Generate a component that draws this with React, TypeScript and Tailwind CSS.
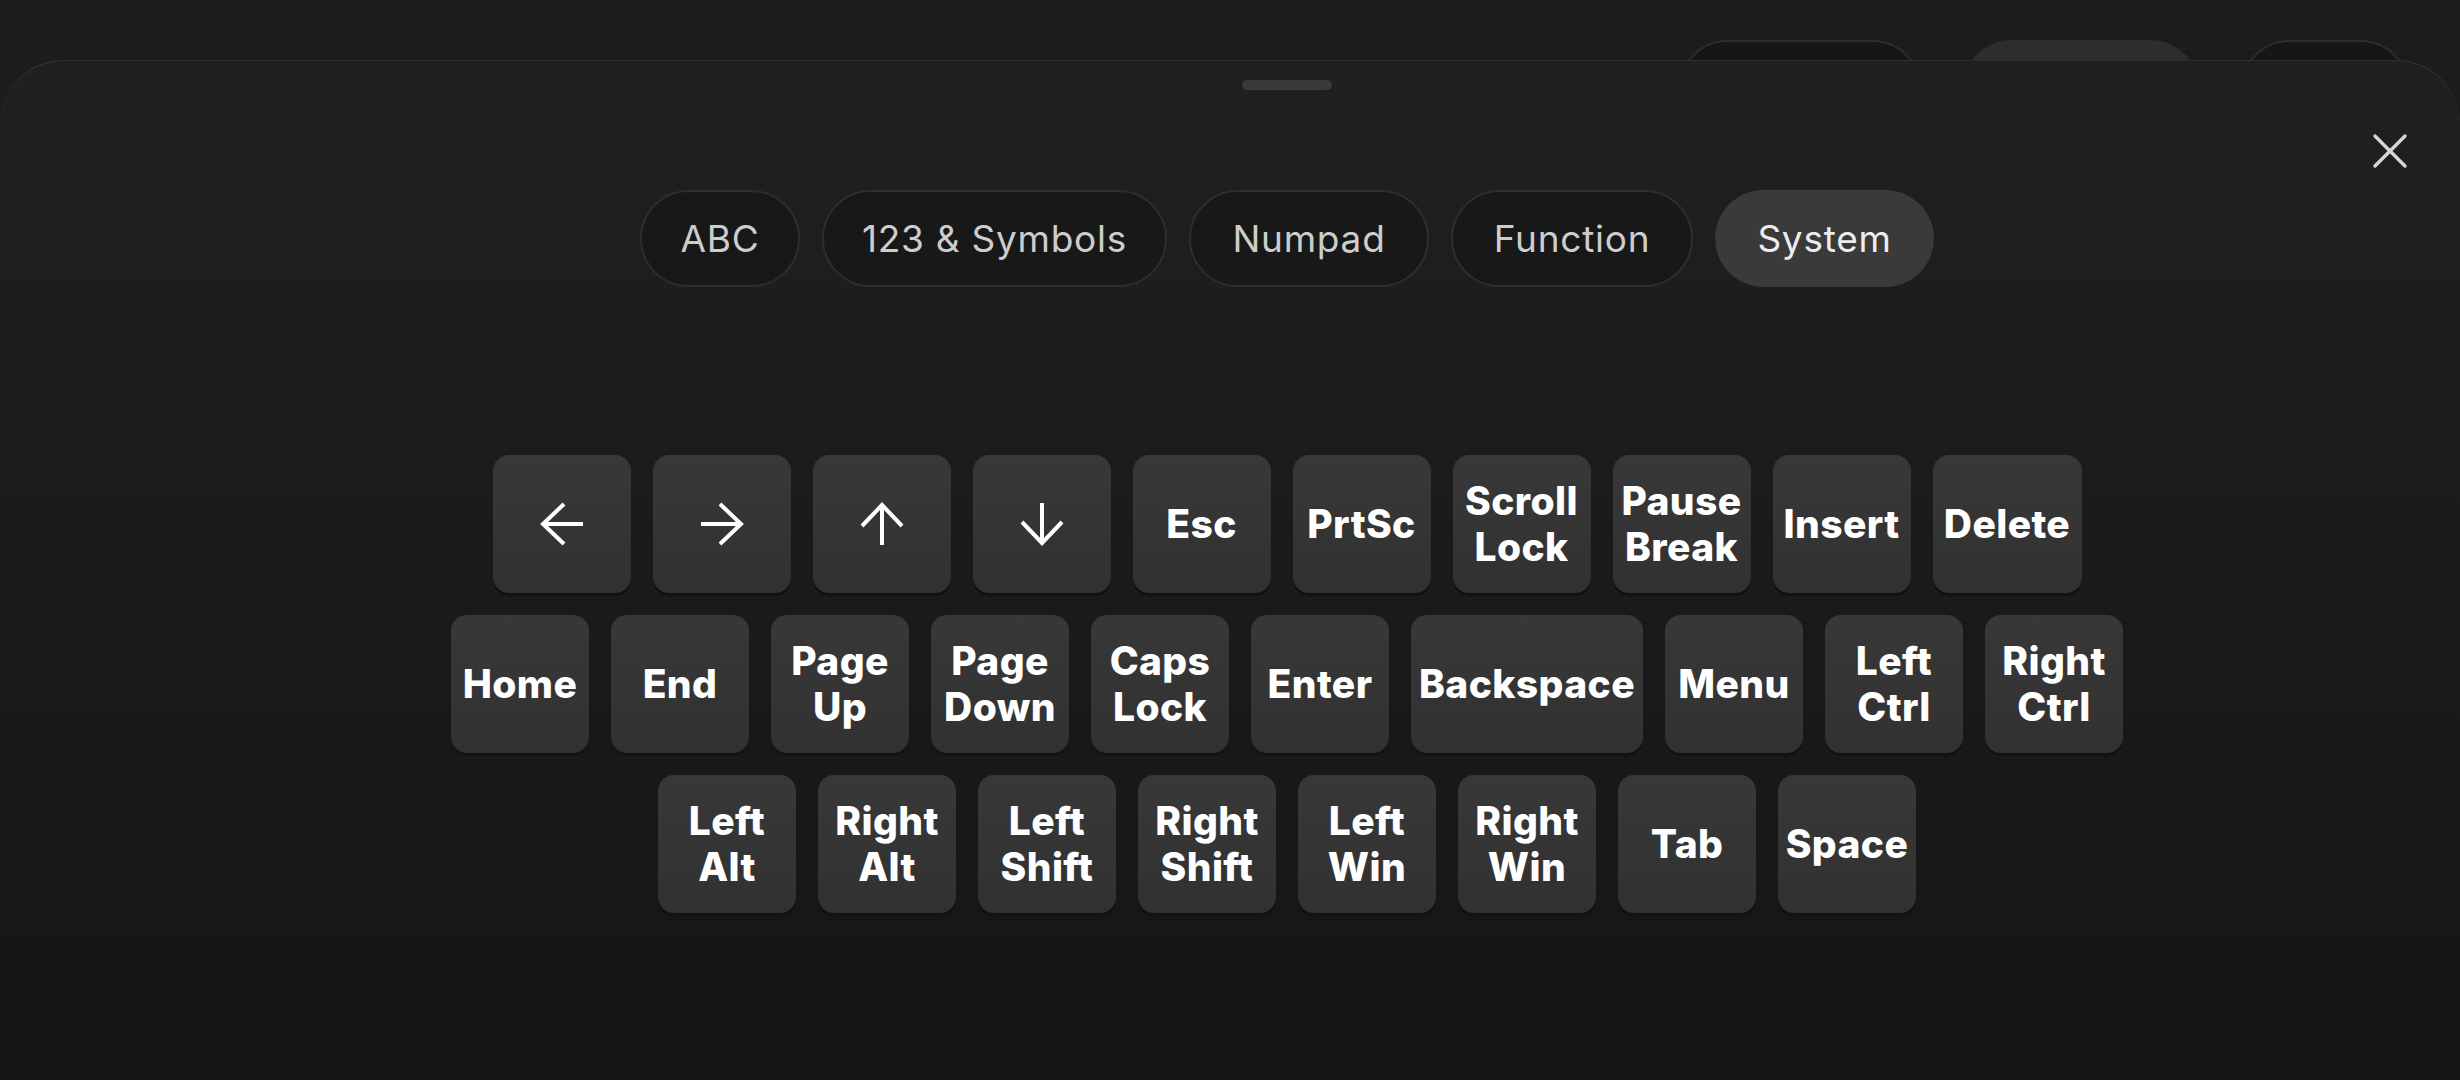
import React from "react";

type KeyDef = { label: string; lines?: [string, string]; icon?: "left" | "right" | "up" | "down"; w?: string };

const rows: KeyDef[][] = [
  [
    { label: "Left", icon: "left" },
    { label: "Right", icon: "right" },
    { label: "Up", icon: "up" },
    { label: "Down", icon: "down" },
    { label: "Esc" },
    { label: "PrtSc" },
    { label: "Scroll Lock", lines: ["Scroll", "Lock"] },
    { label: "Pause Break", lines: ["Pause", "Break"] },
    { label: "Insert" },
    { label: "Delete", w: "w-[149px]" },
  ],
  [
    { label: "Home" },
    { label: "End" },
    { label: "Page Up", lines: ["Page", "Up"] },
    { label: "Page Down", lines: ["Page", "Down"] },
    { label: "Caps Lock", lines: ["Caps", "Lock"] },
    { label: "Enter" },
    { label: "Backspace", w: "w-[232px]" },
    { label: "Menu" },
    { label: "Left Ctrl", lines: ["Left", "Ctrl"] },
    { label: "Right Ctrl", lines: ["Right", "Ctrl"] },
  ],
  [
    { label: "Left Alt", lines: ["Left", "Alt"] },
    { label: "Right Alt", lines: ["Right", "Alt"] },
    { label: "Left Shift", lines: ["Left", "Shift"] },
    { label: "Right Shift", lines: ["Right", "Shift"] },
    { label: "Left Win", lines: ["Left", "Win"] },
    { label: "Right Win", lines: ["Right", "Win"] },
    { label: "Tab" },
    { label: "Space" },
  ],
];

const tabs = [
  { label: "ABC", w: "w-[160px]" },
  { label: "123 & Symbols", w: "w-[345px]" },
  { label: "Numpad", w: "w-[240px]" },
  { label: "Function", w: "w-[242px]" },
  { label: "System", w: "w-[219px]", active: true },
];

function Arrow({ dir }: { dir: "left" | "right" | "up" | "down" }) {
  const rot = { left: 0, right: 180, up: 90, down: 270 }[dir];
  return (
    <svg width="44" height="44" viewBox="0 0 44 44" style={{ transform: `rotate(${rot}deg)` }}>
      <g fill="none" stroke="#ffffff" strokeWidth="4" strokeLinecap="butt" strokeLinejoin="miter">
        <path d="M24 2 L3 22 L24 42" />
        <path d="M3 22 H43" />
      </g>
    </svg>
  );
}

function Key({ k }: { k: KeyDef }) {
  return (
    <button
      className={`${k.w ?? "w-[138px]"} h-[138px] shrink-0 rounded-[16px] bg-gradient-to-b from-[#383838] to-[#313131] shadow-[0_3px_0_#121212] flex items-center justify-center text-white font-extrabold text-[39px] leading-[46px] tracking-[0.01em] text-center`}
    >
      {k.icon ? (
        <Arrow dir={k.icon} />
      ) : k.lines ? (
        <span className="flex flex-col items-center">
          <span>{k.lines[0]}</span>
          <span>{k.lines[1]}</span>
        </span>
      ) : (
        <span>{k.label}</span>
      )}
    </button>
  );
}

export default function App() {
  return (
    <div className="h-screen w-full flex flex-col overflow-hidden bg-[#1b1c1e] font-['Inter','Noto_Sans',sans-serif]">
      {/* app toolbar partly hidden under the sheet */}
      <div className="h-[60px] shrink-0 flex justify-end items-start gap-[42px] pr-[51px] overflow-hidden bg-[repeating-linear-gradient(180deg,#1b1c1e_0px,#1b1c1e_14px,#1e1f21_15px,#1b1c1e_17px)]">
        <div className="mt-[40px] w-[242px] h-[97px] shrink-0 rounded-full bg-[#161616] border-2 border-[#2c2c2c]" />
        <div className="mt-[40px] w-[236px] h-[97px] shrink-0 rounded-full bg-[#2d2d2d]" />
        <div className="mt-[40px] w-[168px] h-[97px] shrink-0 rounded-full bg-[#161616] border-2 border-[#2c2c2c]" />
      </div>

      {/* keyboard sheet */}
      <div className="relative flex-1 rounded-t-[64px] border-t border-white/10 bg-gradient-to-b from-[#202020] to-[#151515]">
        <button className="absolute top-[72px] right-[52px] w-[36px] h-[36px] flex items-center justify-center" aria-label="Close">
          <svg width="36" height="36" viewBox="0 0 36 36">
            <g stroke="#d6d6d6" strokeWidth="3.4" strokeLinecap="round">
              <path d="M3 3 L33 33" />
              <path d="M33 3 L3 33" />
            </g>
          </svg>
        </button>

        <div className="flex flex-col items-center pl-[114px]">
          <div className="mt-[19px] w-[90px] h-[10px] rounded-full bg-[#3a3a3a]" />

          <div className="mt-[100px] flex gap-[22px]">
            {tabs.map((t) => (
              <div
                key={t.label}
                className={`${t.w} h-[97px] rounded-full flex items-center justify-center text-[37px] tracking-[0.02em] ${
                  t.active
                    ? "bg-[#3a3a3a] text-[#ededed]"
                    : "bg-[#181818] border-2 border-[#2e2e2e] text-[#cdcdcd]"
                }`}
              >
                {t.label}
              </div>
            ))}
          </div>

          <div className="mt-[168px] flex flex-col items-center gap-[22px]">
            {rows.map((row, i) => (
              <div key={i} className="flex gap-[22px]">
                {row.map((k) => (
                  <Key key={k.label} k={k} />
                ))}
              </div>
            ))}
          </div>
        </div>
      </div>
    </div>
  );
}
